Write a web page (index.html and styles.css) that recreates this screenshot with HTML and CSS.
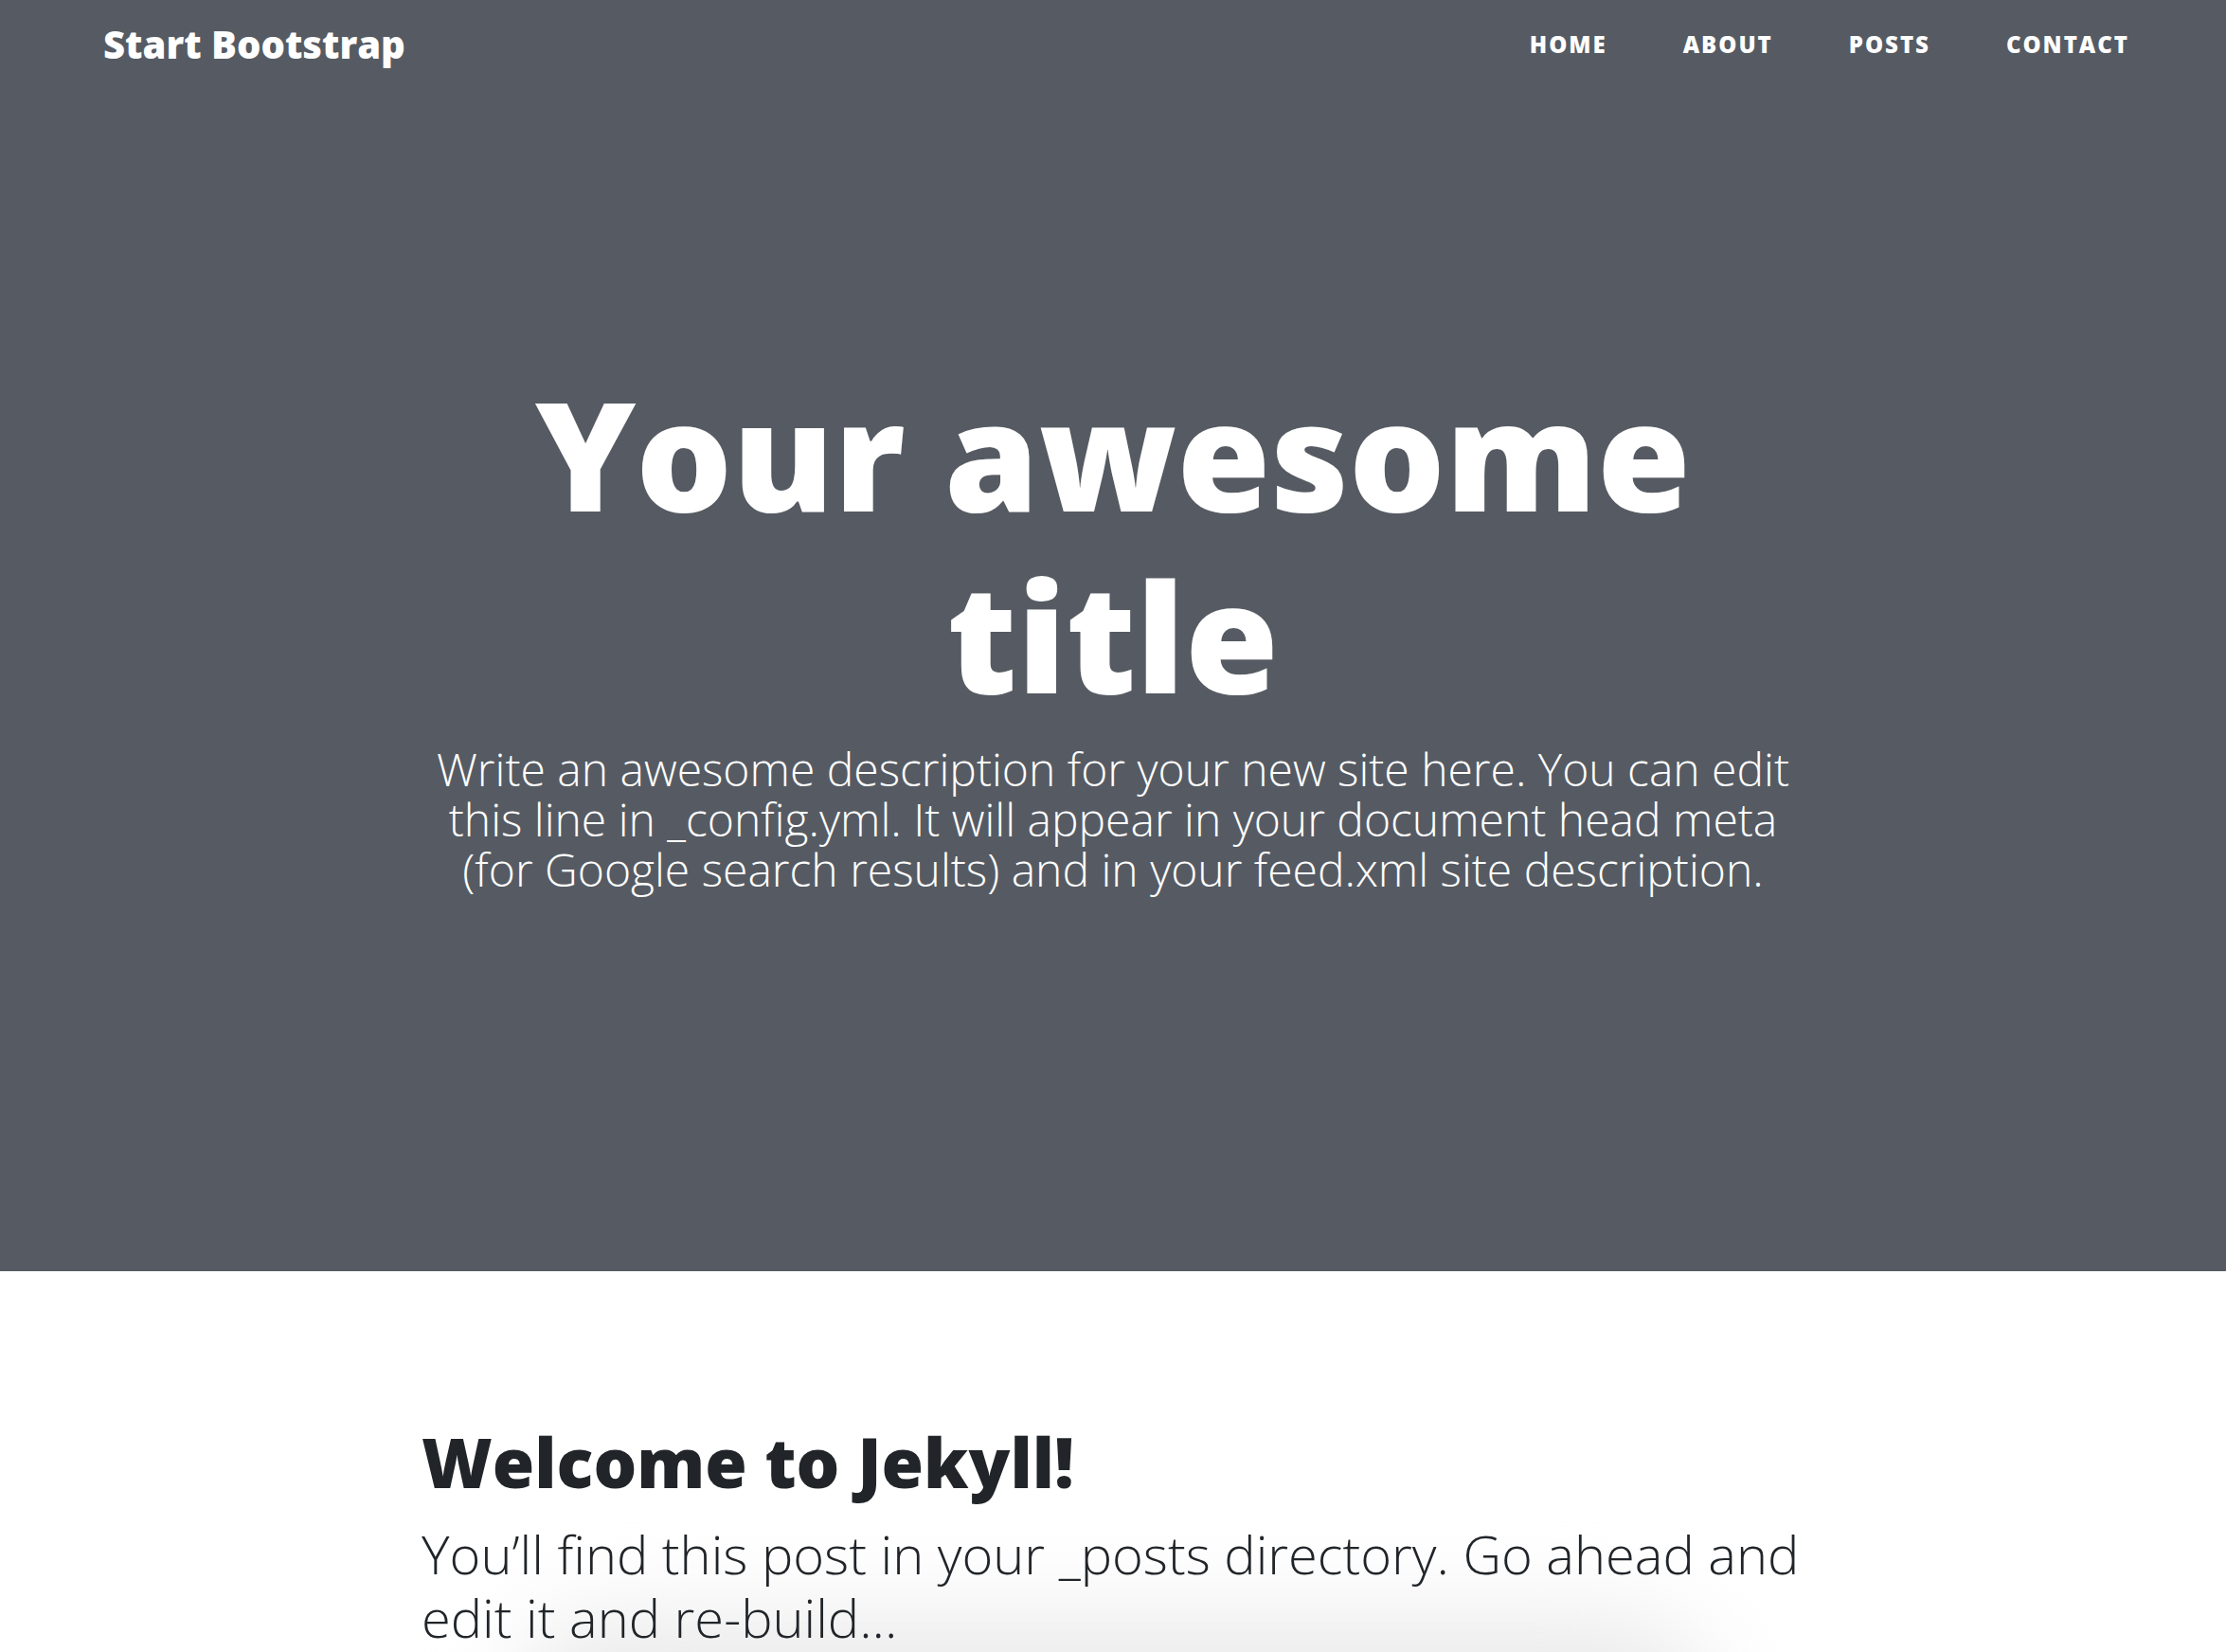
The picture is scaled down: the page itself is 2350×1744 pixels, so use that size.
FILE: index.html
```html
<!DOCTYPE html>
<html lang="en">
<head>
<meta charset="utf-8">
<title>Start Bootstrap</title>
<link rel="stylesheet" href="styles.css">
</head>
<body>
<header class="masthead">
  <nav class="navbar">
    <a class="brand" href="#">Start Bootstrap</a>
    <ul class="nav-links">
      <li><a href="#">Home</a></li>
      <li><a href="#">About</a></li>
      <li><a href="#">Posts</a></li>
      <li><a href="#">Contact</a></li>
    </ul>
  </nav>
  <div class="site-heading">
    <h1>Your awesome title</h1>
    <span class="subheading">Write an awesome description for your new site here. You can edit this line in _config.yml. It will appear in your document head meta (for Google search results) and in your feed.xml site description.</span>
  </div>
</header>
<main class="content">
  <div class="post-preview">
    <h2 class="post-title">Welcome to Jekyll!</h2>
    <h3 class="post-subtitle">You’ll find this post in your _posts directory. Go ahead and edit it and re-build...</h3>
  </div>
  <div class="glow"></div>
</main>
</body>
</html>
```
FILE: styles.css
```css
html, body {
  margin: 0;
  padding: 0;
  background: #fff;
  color: #212529;
  font-family: "Open Sans", "Liberation Sans", sans-serif;
  overflow: hidden;
}

.masthead {
  background: #565b63;
  color: #fff;
}

.navbar {
  display: flex;
  align-items: center;
  justify-content: space-between;
  height: 94px;
  padding: 0 62px 0 109px;
}

.brand {
  font-size: 40px;
  line-height: 1.5;
  font-weight: 800;
  color: #fff;
  text-decoration: none;
}

.nav-links {
  display: flex;
  list-style: none;
  margin: 0;
  padding: 0;
}

.nav-links a {
  display: block;
  padding: 0 40px;
  font-size: 24px;
  line-height: 1.5;
  font-weight: 800;
  letter-spacing: 2px;
  text-transform: uppercase;
  color: #fff;
  text-decoration: none;
}

.site-heading {
  width: 1460px;
  margin: 0 auto;
  padding: 288px 0 398px;
  text-align: center;
}

.site-heading h1 {
  margin: 0;
  font-size: 160px;
  line-height: 1.2;
  font-weight: 800;
}

.subheading {
  display: block;
  margin-top: 20px;
  font-size: 48px;
  line-height: 1.1;
  font-weight: 300;
}

.content {
  width: 1460px;
  margin: 158px auto 0;
}

.post-preview {
  position: relative;
  z-index: 1;
}

.post-title {
  margin: 60px 0 20px;
  font-size: 72px;
  line-height: 1.2;
  font-weight: 800;
}

.post-subtitle {
  margin: 0 0 20px;
  font-size: 56px;
  line-height: 1.2;
  font-weight: 300;
}

.glow {
  width: 1260px;
  height: 220px;
  margin: -50px auto 0;
  border-radius: 90px;
  background: #e9e9e9;
  filter: blur(50px);
}
```
